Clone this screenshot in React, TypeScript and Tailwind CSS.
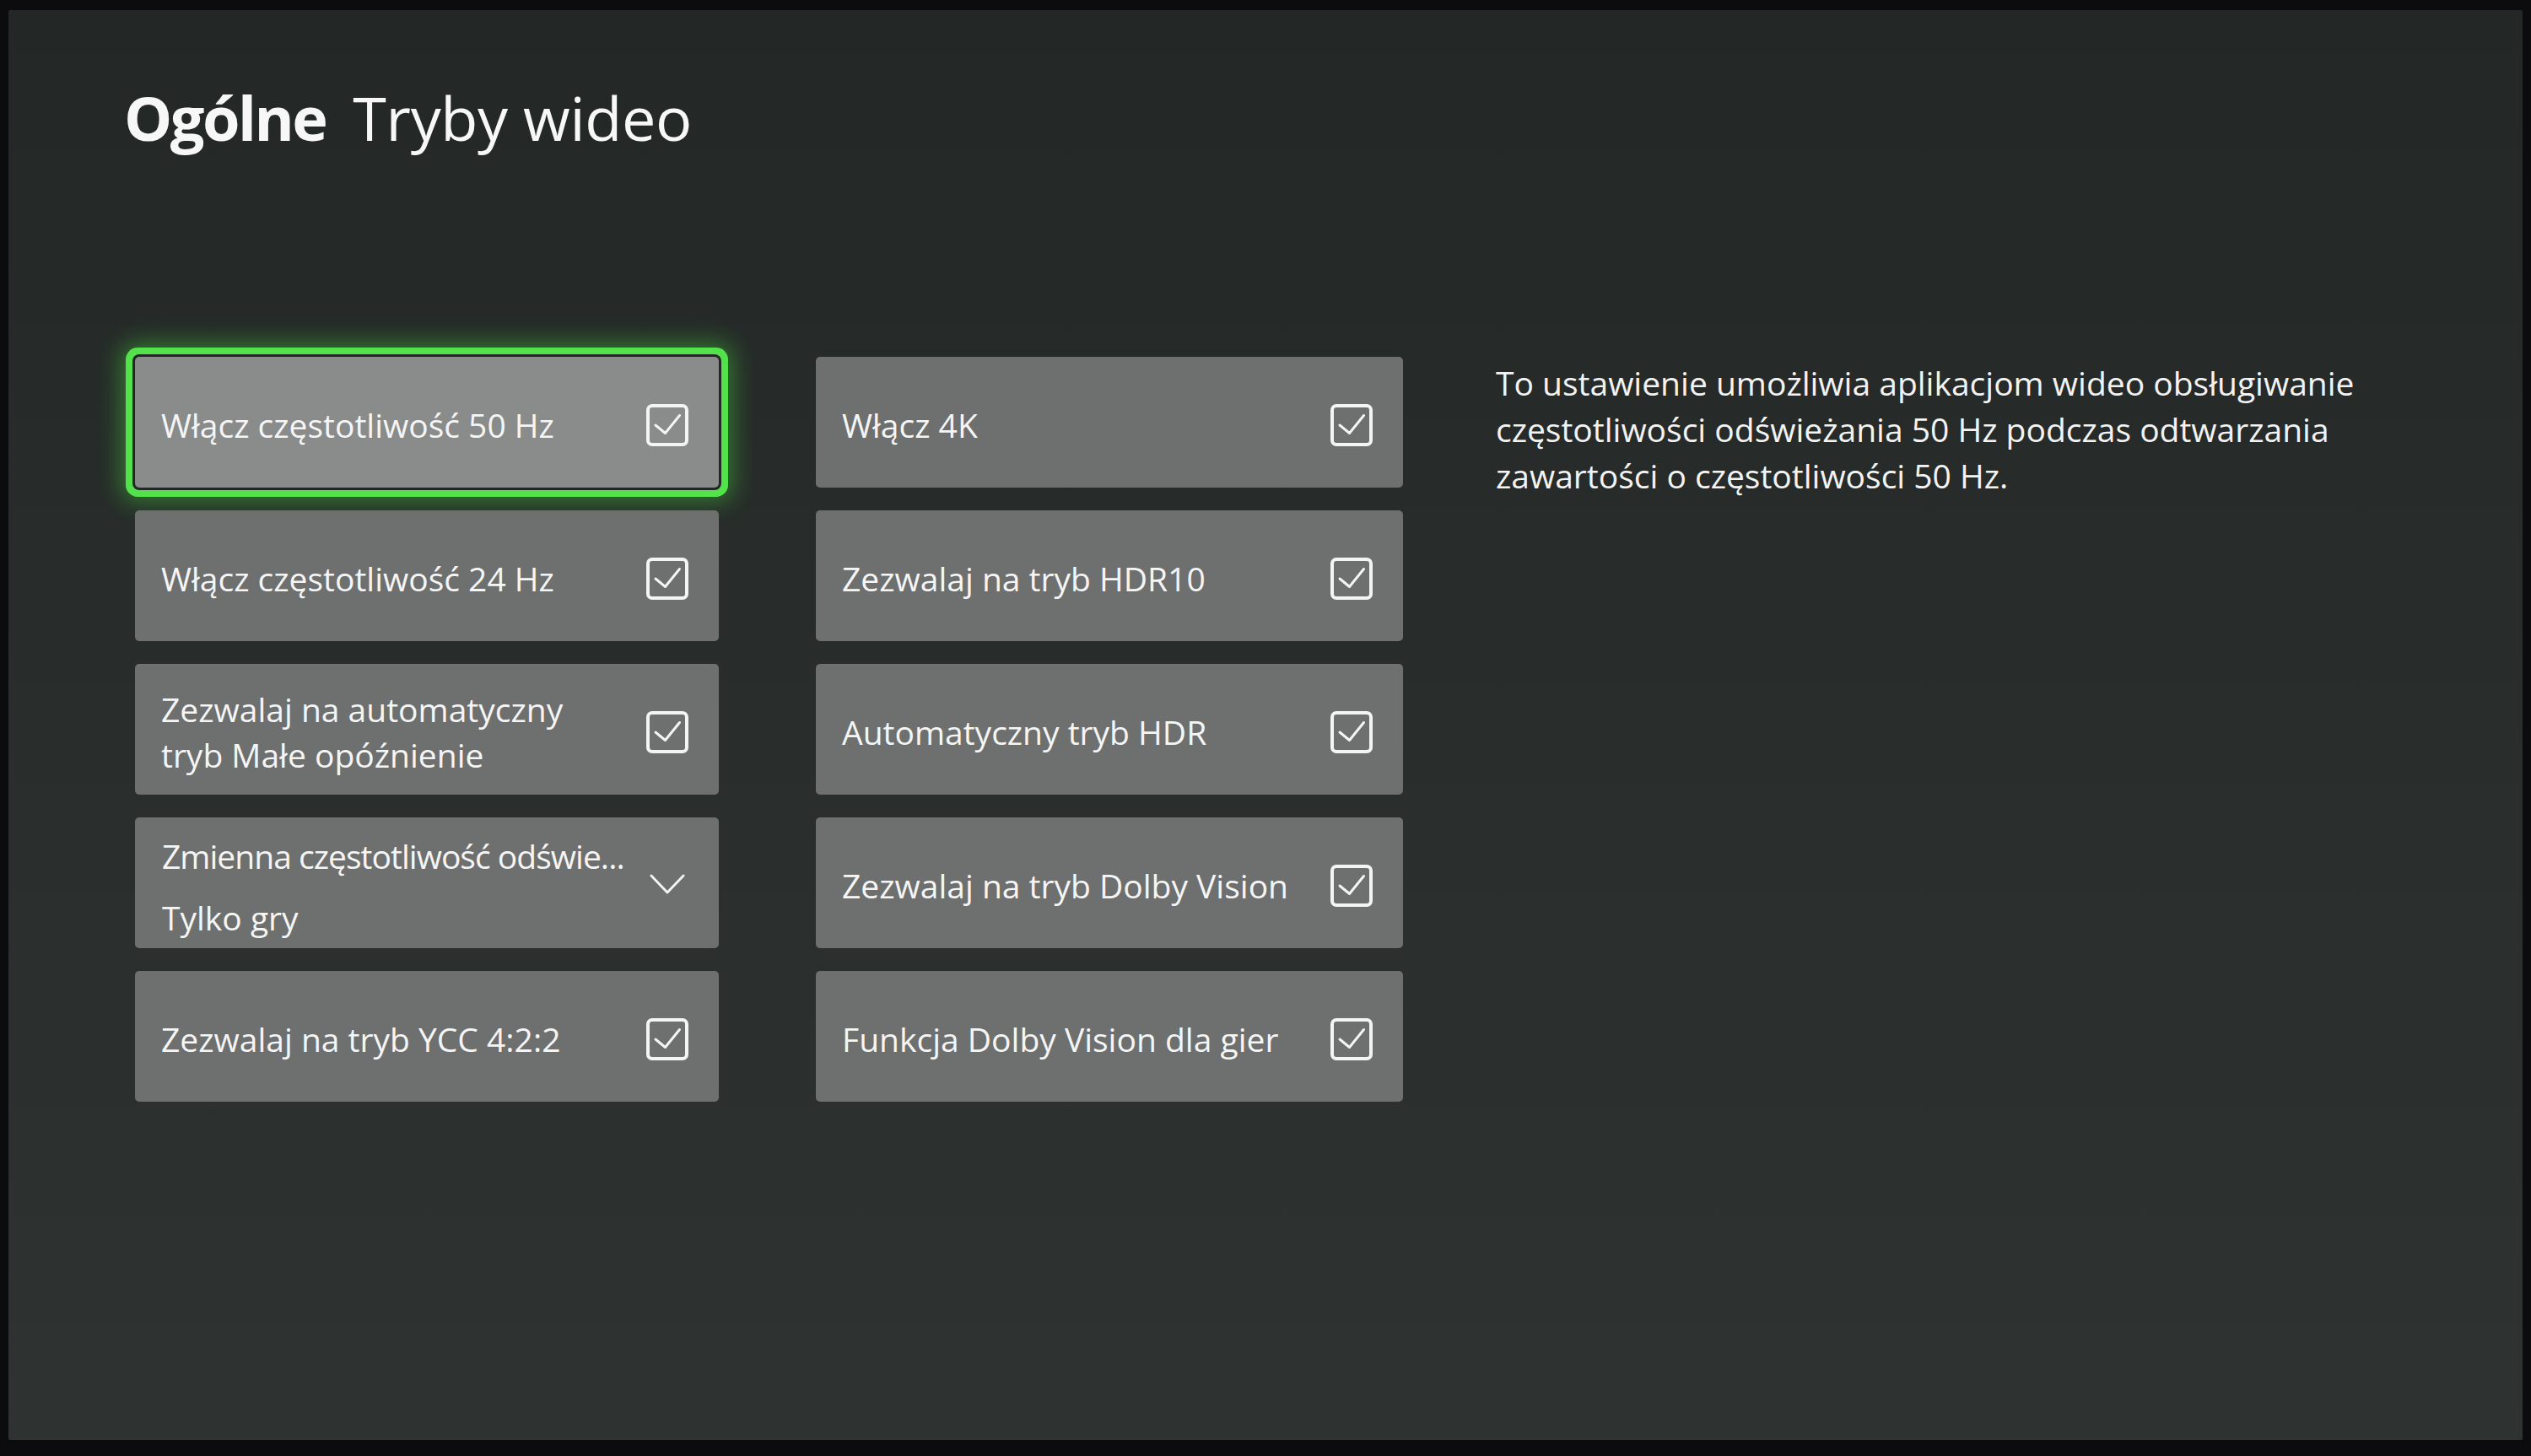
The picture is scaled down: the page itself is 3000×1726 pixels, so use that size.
import React from 'react';

type Option = {
  id: string;
  lines: string[];
  kind: 'check' | 'select';
  value?: string;
};

const leftColumn: Option[] = [
  { id: 'hz50', lines: ['Włącz częstotliwość 50 Hz'], kind: 'check' },
  { id: 'hz24', lines: ['Włącz częstotliwość 24 Hz'], kind: 'check' },
  { id: 'allm', lines: ['Zezwalaj na automatyczny', 'tryb Małe opóźnienie'], kind: 'check' },
  { id: 'vrr', lines: ['Zmienna częstotliwość odświe...'], kind: 'select', value: 'Tylko gry' },
  { id: 'ycc', lines: ['Zezwalaj na tryb YCC 4:2:2'], kind: 'check' },
];

const rightColumn: Option[] = [
  { id: '4k', lines: ['Włącz 4K'], kind: 'check' },
  { id: 'hdr10', lines: ['Zezwalaj na tryb HDR10'], kind: 'check' },
  { id: 'autohdr', lines: ['Automatyczny tryb HDR'], kind: 'check' },
  { id: 'dv', lines: ['Zezwalaj na tryb Dolby Vision'], kind: 'check' },
  { id: 'dvgames', lines: ['Funkcja Dolby Vision dla gier'], kind: 'check' },
];

const font = { fontFamily: '"Open Sans", "Noto Sans", sans-serif' };

const CheckBox = () => (
  <div className="w-[50px] h-[50px] shrink-0 rounded-[7px] border-[4px] border-[#f4f4f4]">
    <svg viewBox="0 0 42 42" className="w-full h-full" fill="none">
      <polyline
        points="7,21 18.5,30.5 35.5,9.5"
        stroke="#f4f4f4"
        strokeWidth="3"
        strokeLinecap="round"
        strokeLinejoin="round"
      />
    </svg>
  </div>
);

const Chevron = () => (
  <div className="w-[50px] shrink-0 flex justify-center">
    <svg viewBox="0 0 44 26" className="w-[42px] h-[25px]" fill="none">
      <polyline points="2,2 22,23 42,2" stroke="#f4f4f4" strokeWidth="3" strokeLinecap="round" strokeLinejoin="round" />
    </svg>
  </div>
);

const Tile = ({ option, focused = false }: { option: Option; focused?: boolean }) => {
  const base = focused
    ? 'bg-[#898c8b] shadow-[0_0_0_3px_#222725,0_0_0_11px_#54e24c,0_0_28px_16px_rgba(70,220,60,0.45)]'
    : 'bg-[#6d706f]';

  if (option.kind === 'select') {
    return (
      <div className={`h-[155px] rounded-[5px] flex items-center pl-[32px] pr-[36px] pt-[4px] ${base}`}>
        <div className="flex-1 min-w-0 flex flex-col gap-[19px] pt-[6px] text-[39px] leading-[54px] font-medium text-[#f5f5f5]">
          <span className="whitespace-nowrap tracking-[-0.025em]">{option.lines[0]}</span>
          <span>{option.value}</span>
        </div>
        <Chevron />
      </div>
    );
  }

  return (
    <div className={`h-[155px] rounded-[5px] flex items-center pl-[31px] pr-[36px] pt-[6px] ${base}`}>
      <div className="flex-1 min-w-0 flex flex-col text-[39px] leading-[54px] font-medium text-[#f5f5f5]">
        {option.lines.map((l) => (
          <span key={l}>{l}</span>
        ))}
      </div>
      <CheckBox />
    </div>
  );
};

export default function App() {
  return (
    <div className="w-[3000px] h-[1726px] bg-[#0c0c0e] pt-[12px] pl-[10px] pr-[10px] pb-[19px]" style={font}>
      <div className="w-full h-full rounded-[2px] bg-gradient-to-b from-[#232826] via-[#292e2c] to-[#2e3331] overflow-hidden">
        {/* header */}
        <div className="pt-[91px] pl-[137px] flex items-baseline text-[72px] leading-none text-[#f7f7f7]">
          <span className="font-bold tracking-[-0.035em]">Ogólne</span>
          <span className="ml-[32px] tracking-[-0.005em]">Tryby wideo</span>
        </div>

        <div className="mt-[248px] pl-[150px] flex items-start">
          <div className="grid grid-cols-[692px_696px] gap-x-[115px] gap-y-[27px]">
            {leftColumn.map((opt, i) => (
              <React.Fragment key={opt.id}>
                <Tile option={opt} focused={i === 0} />
                <Tile option={rightColumn[i]} />
              </React.Fragment>
            ))}
          </div>

          <p className="ml-[110px] mt-[3px] w-[1060px] text-[39px] leading-[55px] font-medium text-[#f3f3f3]">
            To ustawienie umożliwia aplikacjom wideo obsługiwanie częstotliwości odświeżania 50 Hz podczas
            odtwarzania zawartości o częstotliwości 50 Hz.
          </p>
        </div>
      </div>
    </div>
  );
}
